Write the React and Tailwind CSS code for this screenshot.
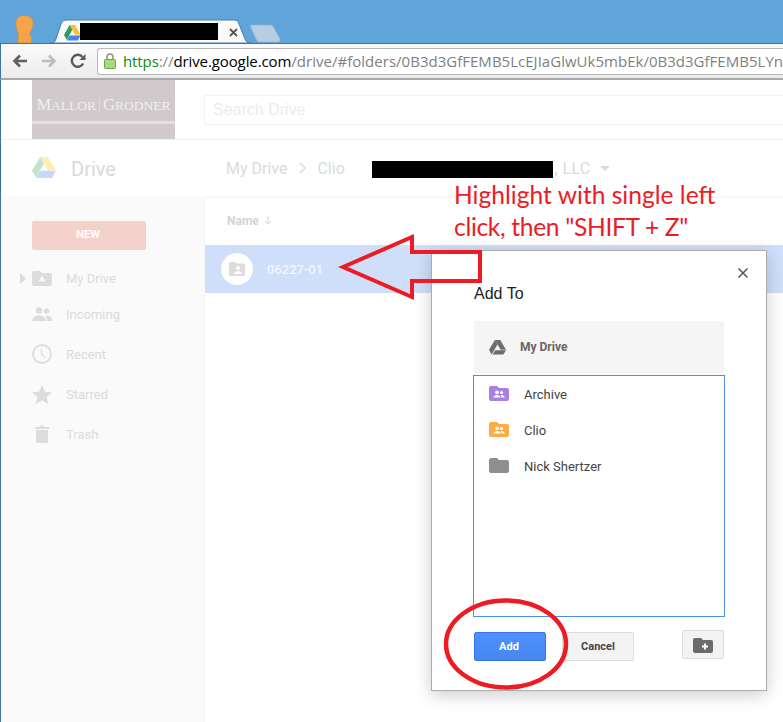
const FOLDER = "M2 1h6l2 2h8a2 2 0 0 1 2 2v9a2 2 0 0 1-2 2H2a2 2 0 0 1-2-2V3a2 2 0 0 1 2-2z";

function Folder({ color, people }) {
  return (
    <svg width="20" height="16" viewBox="0 1 20 16" className="shrink-0">
      <path d={FOLDER} fill={color} />
      {people && (
        <g fill="#fff">
          <circle cx="8" cy="7.3" r="1.9" />
          <circle cx="12.6" cy="7.5" r="1.6" />
          <path d="M4.3 12.6c0-1.6 2.4-2.6 3.7-2.6s3.7 1 3.7 2.6z" />
          <path d="M12.6 12.6c0-1-.4-1.8-1-2.3l1-.2c1.2 0 3.2.9 3.2 2.5z" />
        </g>
      )}
    </svg>
  );
}

function DriveLogo() {
  return (
    <svg width="24" height="22" viewBox="0 0 24 22">
      <path d="M8.2 0h7.6l8 13.5h-7.6z" fill="#fdeeb4" />
      <path d="M0 13.6 8.2 0l3.8 6.8L3.9 20.6z" fill="#c3e4cc" />
      <path d="M3.9 21l4-7.3h15.9l-3.8 7.3z" fill="#c6d9f8" />
    </svg>
  );
}

function SideItem({ icon, label, className }) {
  return (
    <div className={`flex items-center h-10 pl-[31px] ${className || ""}`}>
      <div className="w-5 h-5 flex items-center justify-center shrink-0">{icon}</div>
      <span className="ml-[14px] pt-[2px] text-[13px] text-[#dbdbdb]">{label}</span>
    </div>
  );
}

const C = "#dcdcdc";

export default function App() {
  return (
    <div className="relative w-[783px] h-[722px] overflow-hidden bg-[#5fa5da] font-['Roboto',sans-serif]">
      {/* Tab strip */}
      <div className="relative h-[43px] flex items-end">
        <svg width="20" height="28" viewBox="0 0 20 28" className="ml-[14px] shrink-0">
          <path d="M10.500 0.500C15.500 0.500 19 3 19 8c0 4-1.500 7-3 9.500-.7 1.500-.3 3 1.500 4.500v6H4v-6c.8-1 .8-3 0-4.500C3 15 2 12 2 8 2 3 5.500 0.500 10.500 0.500z" fill="#f6a44a" stroke="#d98a35" strokeWidth=".6" />
        </svg>
        <svg width="202" height="24" viewBox="0 0 202 24" className="ml-[16px] shrink-0">
          <path d="M0 24c4 0 5-1 6-4l5-15c1-3 3-4 6-4h167c3 0 4 1 5 4l6 15c1 3 3 4 7 4z" fill="#fafafa" stroke="#4a7ea8" strokeWidth="1" />
        </svg>
        <svg width="32" height="19" viewBox="0 0 32 19" className="-ml-[2px] shrink-0">
          <path d="M1 1h19c2 0 3 1 4 3l6 11c.5 2-.5 3-2 3H10c-2 0-3-1-4-3L1 4C0 2 0 1 1 1z" fill="#b6cde2" stroke="#8eb4d2" strokeWidth=".8" />
        </svg>
        <svg width="17" height="16" viewBox="0 0 17 16" className="absolute left-[64px] top-[25px]">
          <path d="M5.500 0h5.500l5.500 9.800h-5.500z" fill="#fbc02d" />
          <path d="M0 10 5.500 0l2.800 4.800L2.800 15z" fill="#2e9e5b" />
          <path d="M2.800 15.500l2.800-5h11l-2.800 5z" fill="#4285f4" />
        </svg>
        <div className="absolute left-[80px] top-[23px] w-[138px] h-[17px] bg-black" />
        <svg width="9" height="9" viewBox="0 0 9 9" className="absolute left-[228.500px] top-[27.500px]">
          <path d="M1 1l7 7M8 1 1 8" stroke="#555" strokeWidth="1.800" />
        </svg>
      </div>

      {/* Toolbar */}
      <div className="relative h-[37px] flex items-center border-t border-t-[#3f73a5] border-b-2 border-b-[#a9a9a9] bg-gradient-to-b from-[#fbfbfb] to-[#ececec] border-l border-l-[#3f73a5]">
        <svg width="16" height="14" viewBox="0 0 16 14" className="ml-[11px] shrink-0">
          <path d="M15 7H3M8 1.500 2.500 7 8 12.500" fill="none" stroke="#5f5f5f" strokeWidth="2.600" />
        </svg>
        <svg width="16" height="14" viewBox="0 0 16 14" className="ml-[13px] shrink-0">
          <path d="M1 7h12M8 1.500 13.500 7 8 12.500" fill="none" stroke="#bdbdbd" strokeWidth="2.600" />
        </svg>
        <svg width="16" height="16" viewBox="0 0 16 16" className="ml-[13px] shrink-0">
          <path d="M13.200 10.500A6 6 0 1 1 12.500 4" fill="none" stroke="#5a5a5a" strokeWidth="2.400" />
          <path d="M9.500 7H15.500V1z" fill="#5a5a5a" />
        </svg>
        <div className="ml-[11px] flex-1 min-w-0 h-[27px] flex items-center bg-white border border-[#b9b9b9] rounded-l-[3px] border-r-0 overflow-hidden">
          <svg width="12" height="16" viewBox="0 0 12 16" className="ml-[6px] shrink-0">
            <path d="M3 7V4a3 3 0 0 1 6 0v3" fill="none" stroke="#8a9a7a" strokeWidth="1.600" />
            <rect x=".5" y="6.500" width="11" height="9" rx="1" fill="#a6dc7c" stroke="#6fa04a" />
          </svg>
          <span className="ml-[7px] whitespace-nowrap text-[15px] tracking-[-0.1px] font-['Open_Sans',sans-serif] leading-none">
            <span className="text-[#0b8a0b]">https</span>
            <span className="text-[#8a8a8a]">://</span>
            <span className="text-black">drive.google.com</span>
            <span className="text-[#7f7f7f] tracking-[0.02px]">/drive/#folders/0B3d3GfFEMB5LcEJIaGlwUk5mbEk/0B3d3GfFEMB5LYn</span>
          </span>
        </div>
      </div>

      {/* Page */}
      <div className="h-[642px] bg-white border-l border-l-[#3f73a5] flex flex-col">
        <div className="h-[60px] flex items-start border-b border-b-[#f3f3f3] shrink-0">
          <div className="ml-[31px] w-[143px] h-[59px] bg-[#d0cacd] flex flex-col shrink-0">
            <div className="h-[41px] flex items-end justify-center pb-[8px] text-[16.500px] leading-none text-[#f2eff0] font-['Liberation_Serif',serif] whitespace-nowrap">
              <span>M<span className="text-[13.500px]">ALLOR</span></span>
              <span className="mx-[3px] w-px h-4 bg-[#e0dcdd]" />
              <span>G<span className="text-[13.500px]">RODNER</span></span>
            </div>
            <div className="h-[3px] bg-[#e6e1da]" />
          </div>
          <div className="ml-[29px] mt-[15px] flex-1 h-[30px] border border-[#f3f3f3] border-r-0 flex items-center pl-2 text-[16px] text-[#ececec] font-['Liberation_Sans',sans-serif]">
            Search Drive
          </div>
        </div>

        <div className="h-[56px] flex items-center shrink-0 shadow-[0_1px_3px_rgba(0,0,0,0.06)] relative">
          <div className="ml-[31px] w-6 shrink-0 flex"><DriveLogo /></div>
          <span className="ml-[15px] w-[155px] pt-[2px] text-[20px] text-[#d9d9d9] shrink-0">Drive</span>
          <span className="pt-[2px] text-[16px] text-[#dadada] whitespace-nowrap">My Drive</span>
          <svg width="8" height="12" viewBox="0 0 8 12" className="ml-[12px] shrink-0">
            <path d="M1 1l5 5-5 5" fill="none" stroke="#dcdcdc" strokeWidth="1.500" />
          </svg>
          <span className="ml-[10px] pt-[2px] text-[16px] text-[#dadada]">Clio</span>
          <div className="ml-[27px] mt-[2px] w-[181px] h-[17px] bg-black shrink-0" />
          <span className="ml-[2px] pt-[2px] text-[16px] tracking-[0.3px] text-[#dadada]">, LLC</span>
          <svg width="10" height="5" viewBox="0 0 10 5" className="ml-[9px] shrink-0"><path d="M0 0h10L5 5z" fill="#dcdcdc" /></svg>
        </div>

        <div className="flex-1 flex min-h-0">
          <div className="w-[204px] shrink-0 bg-[#fafafa] border-r border-r-[#f5f5f5] relative">
            <div className="ml-[31px] mt-[25px] w-[114px] h-[29px] rounded-[2px] bg-[#f5d1cc] flex items-center justify-center pr-[2px] text-[11px] font-bold text-white">NEW</div>
            <svg width="6" height="11" viewBox="0 0 6 11" className="absolute left-[19px] top-[77px]"><path d="M0 0l6 5.500L0 11z" fill="#dcdcdc" /></svg>
            <div className="mt-[8px]">
              <SideItem className="h-[40px]" label="My Drive" icon={
                <svg width="20" height="16" viewBox="0 0 20 16"><path d={FOLDER} fill={C} /><path d="M10 5.500l3.500 6h-7z" fill="#fafafa" /></svg>
              } />
              <SideItem className="-mt-1" label="Incoming" icon={
                <svg width="20" height="14" viewBox="0 0 20 14"><g fill={C}><circle cx="7" cy="3.500" r="3.200" /><circle cx="14.500" cy="4" r="2.800" /><path d="M0 14c0-3.500 4-5.500 7-5.500s7 2 7 5.500z" /><path d="M15 14c0-2.500-.8-3.800-1.800-5 3-.8 6.800 1 6.800 3.500V14z" /></g></svg>
              } />
              <SideItem label="Recent" icon={
                <svg width="20" height="20" viewBox="0 0 20 20"><circle cx="10" cy="10" r="9" fill="none" stroke={C} strokeWidth="1.800" /><path d="M9.500 4.500v6l4 3" fill="none" stroke={C} strokeWidth="1.300" /></svg>
              } />
              <SideItem label="Starred" icon={
                <svg width="20" height="19" viewBox="0 0 20 19"><path d="M10 0l2.900 6.700 7.100.6-5.400 4.700 1.600 7L10 15.300 3.800 19l1.600-7L0 7.300l7.100-.6z" fill={C} /></svg>
              } />
              <SideItem label="Trash" icon={
                <svg width="14" height="18" viewBox="0 0 14 18"><path d="M0 2h4.500l1-1.500h3l1 1.500H14v2H0zM1 5h12v11.500a1.500 1.500 0 0 1-1.500 1.500h-9A1.500 1.500 0 0 1 1 16.500z" fill={C} /></svg>
              } />
            </div>
          </div>
          <div className="flex-1 min-w-0">
            <div className="h-[49px] flex items-center pl-[22px] text-[12px] font-bold text-[#d4d4d4]">
              Name
              <svg width="8" height="9" viewBox="0 0 8 9" className="ml-[5px]"><path d="M4 0v8M1 5l3 3 3-3" fill="none" stroke="#d8d8d8" /></svg>
            </div>
            <div className="h-[48px] bg-[#cfdff9] flex items-center pl-4">
              <div className="w-8 h-8 rounded-full bg-white flex items-center justify-center">
                <svg width="16" height="14" viewBox="0 0 16 14">
                  <path d="M1.500 0h4.500l1.500 1.500h7A1.500 1.500 0 0 1 16 3v9.500a1.500 1.500 0 0 1-1.500 1.500h-13A1.500 1.500 0 0 1 0 12.500v-11A1.500 1.500 0 0 1 1.500 0z" fill="#dcdcdc" />
                  <circle cx="9" cy="6" r="2" fill="#fff" /><path d="M5 12c0-2 2.500-3 4-3s4 1 4 3z" fill="#fff" />
                </svg>
              </div>
              <span className="ml-[14px] pt-[2px] text-[13px] font-medium text-[#f2f6fd]">06227-01</span>
            </div>
          </div>
        </div>
      </div>

      {/* Dialog */}
      <div className="absolute left-[431px] top-[250px] w-[336px] h-[441px] bg-white border border-[#acacac] shadow-[0_4px_16px_rgba(0,0,0,0.2)] px-[42px]">
        <svg width="10" height="10" viewBox="0 0 10 10" className="absolute right-[18px] top-[17px]">
          <path d="M.5.5l9 9M9.500.5l-9 9" stroke="#555" strokeWidth="1.500" />
        </svg>
        <div className="mt-[33px] h-5 mb-[-1px] text-[16px] leading-5 text-[#222] font-['Liberation_Sans',sans-serif] whitespace-nowrap">Add To</div>
        <div className="mt-[18px] h-[52px] bg-[#f5f5f5] flex items-center pl-[15px]">
          <svg width="17" height="15" viewBox="0 0 17 15" className="shrink-0">
            <path d="M5.800 0h5.400l5.800 9.800h-5.400z" fill="#6d6d6d" />
            <path d="M0 9.800 5.800 0l2.700 4.600L2.700 14.500z" fill="#6d6d6d" />
            <path d="M3.500 14.500l2.700-4.300H17l-2.700 4.300z" fill="#6d6d6d" />
          </svg>
          <span className="ml-[14px] text-[12px] font-bold text-[#666]">My Drive</span>
        </div>
        <div className="mt-[2px] -mx-px h-[242px] border border-[#4d8fe8]">
          {[
            ["Archive", "#ab7fe0", true],
            ["Clio", "#ffac47", true],
            ["Nick Shertzer", "#8f8f8f", false],
          ].map(([name, color, people]) => (
            <div key={name} className="h-9 flex items-center pl-[15px]">
              <Folder color={color} people={people} />
              <span className="ml-[15px] pt-[2px] text-[13px] text-[#444]">{name}</span>
            </div>
          ))}
        </div>
        <div className="mt-[13px] flex items-start">
          <div className="mt-[2px] w-[72px] h-[29px] rounded-[2px] bg-gradient-to-b from-[#4d90fe] to-[#4787ed] border border-[#3079ed] flex items-center justify-center pt-[2px] pr-[2px] text-[11px] font-bold text-white">Add</div>
          <div className="mt-[2px] ml-4 w-[72px] h-[29px] rounded-[2px] bg-[#f3f3f3] border border-[#dcdcdc] flex items-center justify-center pt-[2px] text-[11px] font-bold text-[#444]">Cancel</div>
          <div className="ml-auto w-[42px] h-[29px] rounded-[2px] bg-[#f3f3f3] border border-[#dcdcdc] flex items-center justify-center">
            <svg width="20" height="16" viewBox="0 0 20 16">
              <path d={FOLDER} fill="#6b6b6b" />
              <path d="M12 6.500v6M9 9.500h6" stroke="#fff" strokeWidth="2" />
            </svg>
          </div>
        </div>
      </div>

      {/* Annotations */}
      <div className="absolute left-[454px] top-[179px] text-[24.600px] leading-[32px] text-[#ed1c24] font-['Lato',sans-serif] whitespace-nowrap">
        Highlight with single left<br /><span className="tracking-[-0.33px]">click, then "SHIFT + Z"</span>
      </div>
      <svg width="150" height="70" viewBox="0 0 150 70" className="absolute left-[337px] top-[232px]">
        <path d="M6 35 75 5v15h68v29H75v16z" fill="none" stroke="#ed1c24" strokeWidth="4" />
      </svg>
      <svg width="130" height="96" viewBox="0 0 130 96" className="absolute left-[441px] top-[596px]">
        <ellipse cx="65" cy="48" rx="60" ry="43.500" fill="none" stroke="#ed1c24" strokeWidth="4.500" />
      </svg>
    </div>
  );
}
